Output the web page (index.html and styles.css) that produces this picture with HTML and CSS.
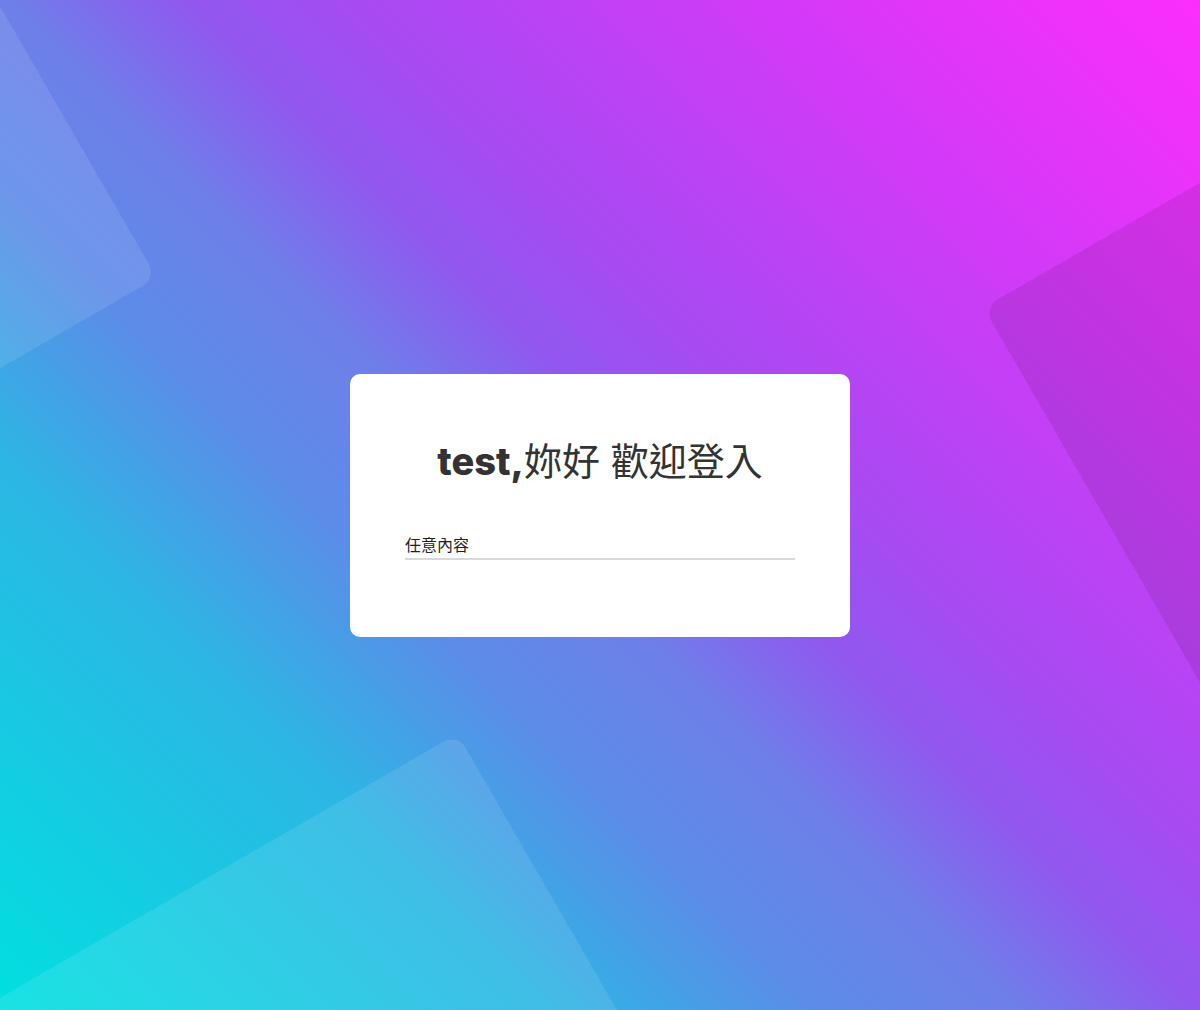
FILE: index.html
```html
<!DOCTYPE html>
<html lang="zh-Hant">
<head>
<meta charset="utf-8">
<title>登入</title>
<link rel="stylesheet" href="styles.css">
</head>
<body>
<div class="stage">
  <div class="shape shape-tl"></div>
  <div class="shape shape-r"></div>
  <div class="shape shape-b"></div>
  <div class="card">
    <h1 class="title"><span class="name">test,</span>妳好 歡迎登入</h1>
    <input class="field" type="text" value="任意內容">
  </div>
</div>
</body>
</html>
```
FILE: styles.css
```css
html, body {
  margin: 0;
  padding: 0;
  height: 100%;
}
body {
  font-family: "Inter", "Noto Sans CJK TC", sans-serif;
}
.stage {
  position: relative;
  overflow: hidden;
  min-height: 100vh;
  display: flex;
  align-items: center;
  justify-content: center;
  background: linear-gradient(45deg,
    #00e0e0 0%,
    #2cb6e4 25%,
    #5c8ce8 37%,
    #6e7fe9 46%,
    #9058ef 54%,
    #a84af2 62%,
    #d23af8 80%,
    #fc2dfd 100%);
}
.shape {
  position: absolute;
  border-radius: 16px;
  transform: rotate(-30deg);
}
.shape-tl {
  left: -553px;
  top: -132px;
  width: 600px;
  height: 600px;
  background: rgba(255, 255, 255, 0.1);
}
.shape-r {
  left: 1130px;
  top: 54px;
  width: 800px;
  height: 800px;
  background: rgba(0, 0, 0, 0.09);
}
.shape-b {
  left: -89px;
  top: 880px;
  width: 800px;
  height: 800px;
  background: rgba(255, 255, 255, 0.1);
}
.card {
  position: relative;
  z-index: 1;
  width: 500px;
  box-sizing: border-box;
  padding: 60px 55px 77px;
  background: #fff;
  border-radius: 10px;
}
.title {
  margin: 0 0 46px;
  font-size: 38px;
  line-height: 54px;
  font-weight: 400;
  color: #333;
  text-align: center;
  font-family: "Inter", "Noto Sans CJK TC", sans-serif;
}
.name {
  font-weight: 800;
  letter-spacing: 0;
}
.field {
  display: block;
  width: 100%;
  box-sizing: border-box;
  margin: 0;
  padding: 0 0 4px;
  border: none;
  border-bottom: 2px solid #d9d9d9;
  outline: none;
  background: transparent;
  font-family: "Noto Sans CJK TC", sans-serif;
  font-size: 16px;
  line-height: 20px;
  height: 26px;
  color: #222;
}
```
